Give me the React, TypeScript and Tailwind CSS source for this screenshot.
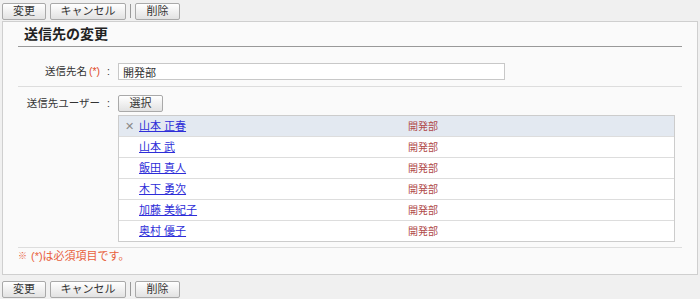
import React from 'react';

const members = [
  { name: '山本 正春', dept: '開発部', active: true },
  { name: '山本 武', dept: '開発部' },
  { name: '飯田 真人', dept: '開発部' },
  { name: '木下 勇次', dept: '開発部' },
  { name: '加藤 美紀子', dept: '開発部' },
  { name: '奥村 優子', dept: '開発部' },
];

function Btn({ children, w }: { children: React.ReactNode; w: string }) {
  return (
    <button
      className={`${w} h-[17px] rounded-[2px] border border-[#a9a9a9] bg-gradient-to-b from-[#ffffff] to-[#e2e2e2] text-[11px] leading-none text-[#333] flex items-center justify-center`}
    >
      {children}
    </button>
  );
}

function Toolbar() {
  return (
    <div className="flex items-center h-[20px] pl-[2px]">
      <Btn w="w-[44px]">変更</Btn>
      <div className="w-[4px]" />
      <Btn w="w-[76px]">キャンセル</Btn>
      <div className="w-[1px] h-[14px] bg-[#999] mx-[4px]" />
      <Btn w="w-[45px]">削除</Btn>
    </div>
  );
}

function Label({ children }: { children: React.ReactNode }) {
  return (
    <div className="w-[100px] flex justify-end text-[10.5px] leading-[17px] pr-[8px]">
      {children}
      <span className="ml-[7px]">:</span>
    </div>
  );
}

export default function App() {
  return (
    <div
      className="w-[700px] h-[299px] bg-[#f0f0f0] text-[#333] overflow-hidden"
      style={{ fontFamily: '"Liberation Sans", "Noto Sans CJK JP", sans-serif' }}
    >
      <div className="pt-[1px]">
        <Toolbar />
      </div>

      <div className="mx-[2px] h-[254px] border border-[#cfcfcf] bg-[#fafafa] px-[15px]">
        <div className="h-[25px] border-b border-[#999] pl-[6px] pt-[3px] text-[14px] font-bold leading-[18px] text-[#222]">
          送信先の変更
        </div>

        <div className="flex items-start h-[40px] border-b border-[#ddd] pt-[16px]">
          <Label>
            送信先名<span className="ml-[2px] text-[#e04a2a]">(*)</span>
          </Label>
          <input
            className="w-[387px] h-[17px] border border-[#c8c8c8] bg-white px-[4px] text-[11px] text-[#333] outline-none"
            defaultValue="開発部"
          />
        </div>

        <div className="flex h-[161px] border-b border-[#ddd] pt-[8px]">
          <Label>送信先ユーザー</Label>
          <div className="flex-1">
            <Btn w="w-[45px]">選択</Btn>
            <div className="mt-[3px] w-[557px] border border-[#ccc] bg-white">
              {members.map((m, i) => (
                <div
                  key={i}
                  className={`flex items-center text-[11px] ${
                    i > 0 ? 'h-[21px] border-t border-[#ddd]' : 'h-[20px]'
                  } ${m.active ? 'bg-[#e3e9f1]' : ''}`}
                >
                  <div className="w-[20px] flex justify-center text-[#888] text-[11px]">
                    {m.active ? '✕' : ''}
                  </div>
                  <a className="w-[269px] text-[#2d2dd8] underline" href="#">
                    {m.name}
                  </a>
                  <span className="text-[10px] text-[#b04a4a]">{m.dept}</span>
                </div>
              ))}
            </div>
          </div>
        </div>

        <div className="text-[11px] text-[#e8603c] h-[17px] flex items-center">
          <span className="text-[9px] mr-[4px]">※</span>(*)は必須項目です。
        </div>
      </div>

      <div className="pt-[4px]">
        <Toolbar />
      </div>
    </div>
  );
}
